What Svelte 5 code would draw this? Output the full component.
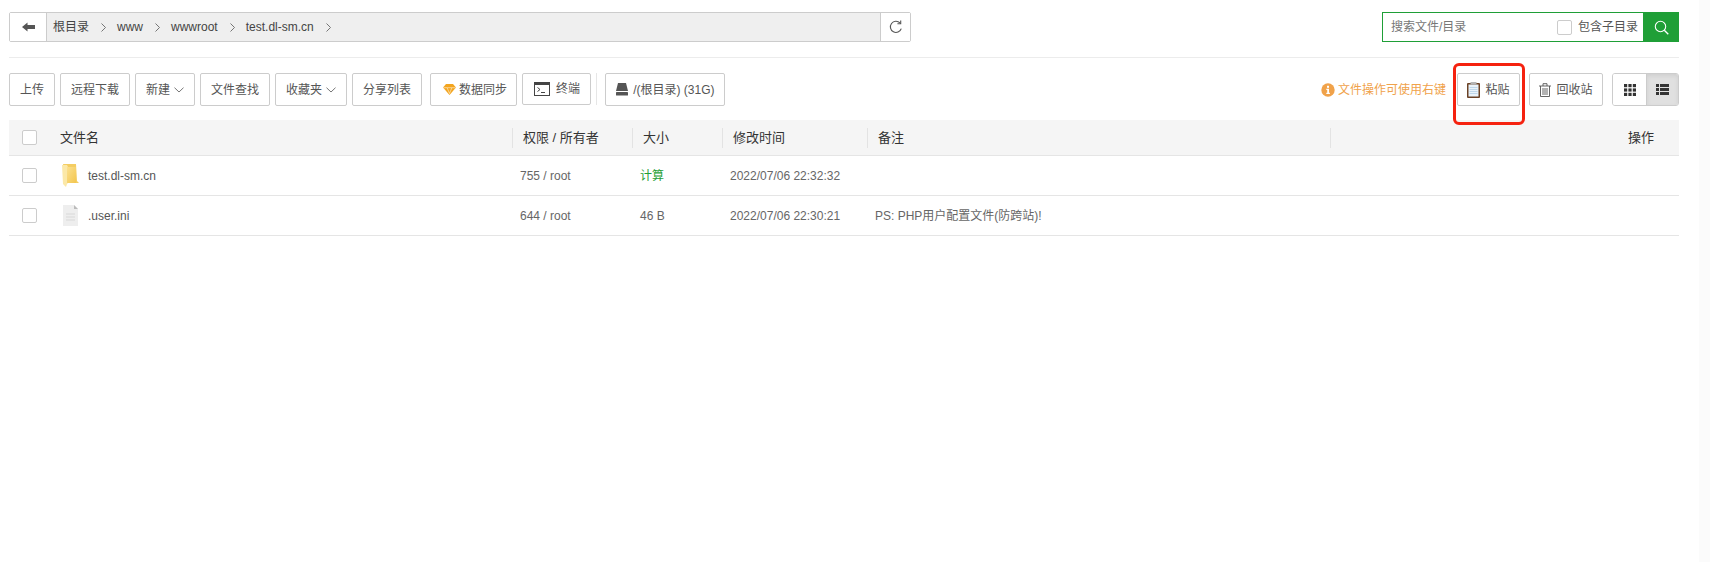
<script>
  const crumbs = ['根目录', 'www', 'wwwroot', 'test.dl-sm.cn'];
  const columns = ['权限 / 所有者', '大小', '修改时间', '备注'];
</script>

<div class="page">
  <header class="top">
    <div class="path">
      <button class="back" aria-label="返回">
        <svg width="13" height="10" viewBox="0 0 13 10"><path d="M0 5 5.5.6V3H13v4H5.5v2.4z" fill="#555"/></svg>
      </button>
      <div class="crumbs">
        {#each crumbs as c}
          <span class="crumb">{c}</span>
          <svg class="sep" width="5" height="9" viewBox="0 0 5 9"><path d="M.5.5 4.5 4.5.5 8.5" fill="none" stroke="#666" stroke-width=".9"/></svg>
        {/each}
      </div>
      <button class="refresh" aria-label="刷新">
        <svg width="14" height="14" viewBox="0 0 14 14"><path d="M12.3 8.6A5.6 5.6 0 1 1 11 2.9" fill="none" stroke="#555" stroke-width="1.1"/><path d="M11.7.4v3.4H8.4" fill="none" stroke="#555" stroke-width="1.1"/></svg>
      </button>
    </div>
    <div class="search">
      <span class="placeholder">搜索文件/目录</span>
      <span class="box small"></span>
      <span class="include">包含子目录</span>
      <button class="go" aria-label="搜索">
        <svg width="15" height="15" viewBox="0 0 15 15"><circle cx="6.5" cy="6.5" r="5.2" fill="none" stroke="#fff" stroke-width="1.1"/><path d="m10.3 10.3 4 4" stroke="#fff" stroke-width="1.3"/></svg>
      </button>
    </div>
  </header>

  <hr />

  <div class="toolbar">
    <div class="group">
      <button>上传</button>
      <button>远程下载</button>
      <button>新建<svg class="chev" width="10" height="6" viewBox="0 0 10 6"><path d="M.5.7 5 5 9.500.7" fill="none" stroke="#666" stroke-width=".9"/></svg></button>
      <button>文件查找</button>
      <button>收藏夹<svg class="chev" width="10" height="6" viewBox="0 0 10 6"><path d="M.5.7 5 5 9.500.7" fill="none" stroke="#666" stroke-width=".9"/></svg></button>
      <button class="share">分享列表</button>
      <button class="sync">
        <svg width="13" height="11" viewBox="0 0 13 11"><path d="M3 0h7l3 3.500L6.500 11 0 3.500z" fill="#f3a51f"/><path d="M.5 3.700h12M4.200 3.900 6.500 9.500 8.800 3.900" fill="none" stroke="#fff" stroke-width=".5"/></svg>
        数据同步
      </button>
      <button class="term">
        <svg width="16" height="14" viewBox="0 0 16 14"><rect x=".5" y=".5" width="15" height="13" fill="none" stroke="#444"/><rect x="0" y="0" width="16" height="3" fill="#444"/><path d="m3.500 5.500 2.500 2-2.500 2M7 10.500h4" fill="none" stroke="#444"/></svg>
        <span>终端</span>
      </button>
      <span class="vr"></span>
      <button class="disk">
        <svg width="12" height="13" viewBox="0 0 12 13"><path d="M2 0h8l2 8H0z" fill="#555"/><rect y="9" width="12" height="3.500" rx=".6" fill="#555"/></svg>
        /(根目录) (31G)
      </button>
    </div>
    <div class="group right">
      <span class="hint">
        <svg width="14" height="14" viewBox="0 0 14 14"><circle cx="7" cy="7" r="6.700" fill="#f0a24a"/><rect x="6" y="2.800" width="2" height="2" fill="#fff"/><path d="M5.300 5.800H8v4h.9v1.200H5.300V9.800h.9V7H5.300z" fill="#fff"/></svg>
        文件操作可使用右键
      </span>
      <button class="paste">
        <svg width="13" height="16" viewBox="0 0 13 16"><rect y="1" width="13" height="15" rx="1" fill="#6b4226"/><rect x="1.500" y="2.500" width="10" height="12" fill="#eaf3fa"/><path d="M2.500 5.500h8M2.500 7.500h8M2.500 9.500h8M2.500 11.500h8" stroke="#b4cfe6" stroke-width=".8"/><rect x="3.500" y="0" width="6" height="2.500" fill="#b5b5b5"/></svg>
        粘贴
      </button>
      <button class="trash">
        <svg width="12" height="14" viewBox="0 0 12 14"><path d="M0 3h12M4 3V.7h4V3M1.500 3v10.500h9V3M4 5v7M6 5v7M8 5v7" fill="none" stroke="#555" stroke-width=".9"/></svg>
        回收站
      </button>
      <div class="views">
        <button aria-label="网格视图">
          <svg width="12" height="12" viewBox="0 0 12 12" fill="#333"><rect width="3.200" height="3.200"/><rect x="4.400" width="3.200" height="3.200"/><rect x="8.800" width="3.200" height="3.200"/><rect y="4.400" width="3.200" height="3.200"/><rect x="4.400" y="4.400" width="3.200" height="3.200"/><rect x="8.800" y="4.400" width="3.200" height="3.200"/><rect y="8.800" width="3.200" height="3.200"/><rect x="4.400" y="8.800" width="3.200" height="3.200"/><rect x="8.800" y="8.800" width="3.200" height="3.200"/></svg>
        </button>
        <button class="on" aria-label="列表视图">
          <svg width="13" height="11" viewBox="0 0 13 11" fill="#333"><rect width="3" height="3"/><rect x="4" width="9" height="3"/><rect y="4" width="3" height="3"/><rect x="4" y="4" width="9" height="3"/><rect y="8" width="3" height="3"/><rect x="4" y="8" width="9" height="3"/></svg>
        </button>
      </div>
    </div>
  </div>

  <section class="table">
    <div class="row head">
      <div class="name"><span class="box"></span><span class="title">文件名</span></div>
      {#each columns as col}
        <div class="th">{col}</div>
      {/each}
      <div class="th op">操作</div>
    </div>
    <div class="row">
      <div class="name">
        <span class="box"></span>
        <svg class="ficon" width="17" height="24" viewBox="0 0 17 24">
          <defs><linearGradient id="fg" x1="0" x2="1" y1="0" y2="1"><stop offset="0" stop-color="#fbe08f"/><stop offset="1" stop-color="#f3c64f"/></linearGradient></defs>
          <path d="M1 0h13l1 17 2 2H5z" fill="#f4cd62"/>
          <path d="M0 1h5l1 2 1 1v14l-2 2-1 3-3-3z" fill="#fbe8a8"/>
          <path d="M5 3h9v16H5z" fill="url(#fg)"/>
        </svg>
        <span class="fname">test.dl-sm.cn</span>
      </div>
      <div class="td">755 / root</div>
      <div class="td calc">计算</div>
      <div class="td">2022/07/06 22:32:32</div>
      <div class="td"></div>
      <div class="td"></div>
    </div>
    <div class="row">
      <div class="name">
        <span class="box"></span>
        <svg class="ficon" width="17" height="21" viewBox="0 0 17 21">
          <path d="M1 0h11l4 4v17H1z" fill="#eee"/>
          <path d="M12 0l4 4h-4z" fill="#bbb"/>
          <path d="M4 9h9M4 12h9M4 15h9" stroke="#d8d8d8"/>
        </svg>
        <span class="fname">.user.ini</span>
      </div>
      <div class="td">644 / root</div>
      <div class="td">46 B</div>
      <div class="td">2022/07/06 22:30:21</div>
      <div class="td">PS: PHP用户配置文件(防跨站)!</div>
      <div class="td"></div>
    </div>
  </section>

  <div class="mark"></div>
  <div class="scroll"></div>
</div>

<style>
  :global(body) {
    margin: 0;
    background: #fff;
  }
  .page {
    position: relative;
    height: 562px;
    box-sizing: border-box;
    padding: 12px 31px 0 9px;
    overflow: hidden;
    font: 12px/1 "Liberation Sans", "Noto Sans CJK SC", sans-serif;
    color: #555;
  }
  button {
    font: inherit;
    color: #555;
    background: #fff;
    border: 1px solid #ccc;
    border-radius: 2px;
    padding: 0;
    display: inline-flex;
    align-items: center;
    justify-content: center;
    box-sizing: border-box;
  }
  .top {
    display: flex;
    justify-content: space-between;
    height: 30px;
  }
  .path {
    display: flex;
    width: 902px;
    box-sizing: border-box;
    border: 1px solid #ccc;
    border-radius: 2px;
  }
  .back {
    width: 37px;
    border: 0;
    border-right: 1px solid #ccc;
    border-radius: 0;
  }
  .crumbs {
    flex: 1;
    display: flex;
    align-items: center;
    gap: 11px;
    padding-left: 6px;
    background: #efefef;
    color: #444;
  }
  .sep {
    margin-left: 1px;
  }
  .refresh {
    width: 30px;
    border: 0;
    border-left: 1px solid #ccc;
    border-radius: 0;
  }
  .search {
    display: flex;
    align-items: center;
    width: 297px;
    box-sizing: border-box;
    border: 1px solid #1f9f37;
    color: #555;
  }
  .placeholder {
    flex: 1;
    padding-left: 8px;
    color: #777;
  }
  .small {
    border-color: #b5b5b5;
  }
  .include {
    margin: 0 5px 0 6px;
  }
  .go {
    width: 36px;
    height: 30px;
    margin-right: -1px;
    background: #1f9f37;
    border: 0;
    border-radius: 0;
  }
  .box {
    flex: none;
    width: 15px;
    height: 15px;
    box-sizing: border-box;
    border: 1px solid #ccc;
    border-radius: 2px;
    background: #fff;
  }
  hr {
    margin: 15px 0;
    border: 0;
    border-top: 1px solid #ececec;
  }
  .toolbar {
    display: flex;
    justify-content: space-between;
    height: 32px;
  }
  .group {
    display: flex;
    gap: 5px;
    align-items: flex-start;
  }
  .group > button {
    height: 33px;
    padding: 0 10px;
    gap: 3px;
  }
  .chev {
    margin-left: 1px;
  }
  .share {
    margin-right: 3px;
  }
  .group > .sync {
    padding: 0 9px 0 12px;
  }
  .group > .term {
    height: 32px;
    padding: 0 10px 0 11px;
    gap: 6px;
  }
  .vr {
    width: 1px;
    height: 32px;
    background: #e6e6e6;
  }
  .group > .disk {
    margin-left: 3px;
    padding: 0 10px;
    gap: 5px;
  }
  .right {
    gap: 9px;
  }
  .hint {
    display: flex;
    align-items: center;
    gap: 3px;
    height: 33px;
    margin-right: 2px;
    color: #f0a24a;
  }
  .group > .paste {
    width: 63px;
    padding: 0;
    gap: 5px;
  }
  .group > .trash {
    width: 74px;
    padding: 0;
    gap: 5px;
  }
  .views {
    display: flex;
    height: 33px;
    box-sizing: border-box;
    border: 1px solid #ccc;
    border-radius: 3px;
    overflow: hidden;
  }
  .views button {
    width: 33px;
    border: 0;
    border-radius: 0;
  }
  .views .on {
    width: 32px;
    background: #e0e0e0;
    border-left: 1px solid #ccc;
    box-shadow: inset 0 2px 4px rgba(0, 0, 0, 0.08);
  }
  .table {
    margin-top: 15px;
  }
  .row {
    display: grid;
    grid-template-columns: 503px 120px 90px 145px 463px 349px;
    height: 40px;
    box-sizing: border-box;
    align-items: center;
    border-bottom: 1px solid #e5e5e5;
  }
  .head {
    height: 36px;
    background: #f5f5f5;
    color: #333;
    font-size: 13px;
  }
  .name {
    display: flex;
    align-items: center;
    padding-left: 13px;
  }
  .title {
    margin-left: 23px;
  }
  .ficon {
    margin-left: 25px;
  }
  .fname {
    margin-left: 9px;
  }
  .th {
    height: 20px;
    line-height: 20px;
    padding-left: 10px;
    border-left: 1px solid #e3e3e3;
  }
  .op {
    padding: 0 25px 0 0;
    text-align: right;
  }
  .td {
    padding-left: 8px;
    color: #666;
  }
  .td.calc {
    color: #1f9f37;
  }
  .mark {
    position: absolute;
    left: 1453px;
    top: 63px;
    width: 72px;
    height: 62px;
    box-sizing: border-box;
    border: 3px solid #f5220f;
    border-radius: 6px;
  }
  .scroll {
    position: absolute;
    top: 0;
    right: 0;
    bottom: 0;
    width: 11px;
    background: #fbfbfb;
  }
</style>
